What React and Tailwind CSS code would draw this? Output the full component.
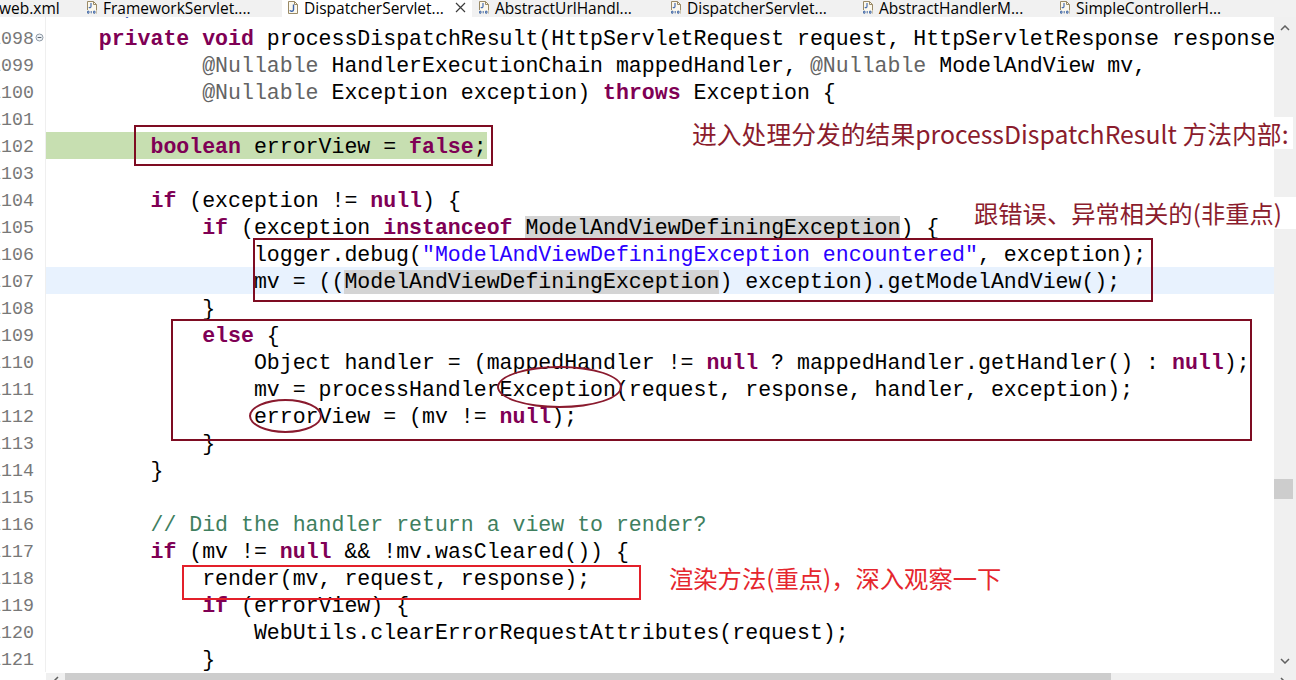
import React from 'react';

// ---------------------------------------------------------------------------
// Editor content: [text, kind] tokens per line
//   k = keyword, s = string, c = comment, a = annotation, m = occurrence mark
// ---------------------------------------------------------------------------
const LINES = [
  { n: 1097, t: [['     '], ['*/', 'j']] },
  { n: 1098, fold: true, t: [['    '], ['private', 'k'], [' '], ['void', 'k'], [' processDispatchResult(HttpServletRequest request, HttpServletResponse response,']] },
  { n: 1099, t: [['            '], ['@Nullable', 'a'], [' HandlerExecutionChain mappedHandler, '], ['@Nullable', 'a'], [' ModelAndView mv,']] },
  { n: 1100, t: [['            '], ['@Nullable', 'a'], [' Exception exception) '], ['throws', 'k'], [' Exception {']] },
  { n: 1101, t: [] },
  { n: 1102, green: true, t: [['        '], ['boolean', 'k'], [' errorView = '], ['false', 'k'], [';']] },
  { n: 1103, t: [] },
  { n: 1104, t: [['        '], ['if', 'k'], [' (exception != '], ['null', 'k'], [') {']] },
  { n: 1105, t: [['            '], ['if', 'k'], [' (exception '], ['instanceof', 'k'], [' '], ['ModelAndViewDefiningException', 'm'], [') {']] },
  { n: 1106, t: [['                logger.debug('], ['"ModelAndViewDefiningException encountered"', 's'], [', exception);']] },
  { n: 1107, current: true, t: [['                mv = (('], ['ModelAndViewDefiningException', 'm'], [') exception).getModelAndView();']] },
  { n: 1108, t: [['            }']] },
  { n: 1109, t: [['            '], ['else', 'k'], [' {']] },
  { n: 1110, t: [['                Object handler = (mappedHandler != '], ['null', 'k'], [' ? mappedHandler.getHandler() : '], ['null', 'k'], [');']] },
  { n: 1111, t: [['                mv = processHandlerException(request, response, handler, exception);']] },
  { n: 1112, t: [['                errorView = (mv != '], ['null', 'k'], [');']] },
  { n: 1113, t: [['            }']] },
  { n: 1114, t: [['        }']] },
  { n: 1115, t: [] },
  { n: 1116, t: [['        '], ['// Did the handler return a view to render?', 'c']] },
  { n: 1117, t: [['        '], ['if', 'k'], [' (mv != '], ['null', 'k'], [' && !mv.wasCleared()) {']] },
  { n: 1118, t: [['            render(mv, request, response);']] },
  { n: 1119, t: [['            '], ['if', 'k'], [' (errorView) {']] },
  { n: 1120, t: [['                WebUtils.clearErrorRequestAttributes(request);']] },
  { n: 1121, t: [['            }']] },
];

const TOKEN_CLASS = {
  k: 'text-[#7f0055] font-bold',
  s: 'text-[#2a00ff]',
  c: 'text-[#3f7f5f]',
  a: 'text-[#646464]',
  m: 'bg-[#d4d4d4]',
  j: 'text-[#3f5fbf]',
};

// ---------------------------------------------------------------------------
// Tabs
// ---------------------------------------------------------------------------
const TABS = [
  { label: 'web.xml', cls: 'w-[85px] -ml-[1px]', icon: null },
  { label: 'FrameworkServlet....', cls: 'w-[198px] pl-0', icon: 'class' },
  { label: 'DispatcherServlet...', cls: 'w-[190px] pl-[3px] bg-white', icon: 'java', active: true },
  { label: 'AbstractUrlHandl...', cls: 'w-[192px] pl-[4px]', icon: 'class' },
  { label: 'DispatcherServlet...', cls: 'w-[196px] pl-[4px]', icon: 'class' },
  { label: 'AbstractHandlerM...', cls: 'w-[197px] pl-0', icon: 'class' },
  { label: 'SimpleControllerH...', cls: 'w-[200px] pl-0', icon: 'class' },
];

function ClassIcon() {
  return (
    <svg width="15" height="15" viewBox="0 0 15 15" className="shrink-0 mr-[4px]">
      <path d="M3.5 1.5h6l3 3v9h-9z" fill="#fbf8ee" stroke="#9a8a66" />
      <path d="M9.5 1.5v3h3" fill="none" stroke="#9a8a66" />
      <path d="M7 3v3.5c0 1.2-1.3 1.5-2.2 0.8" fill="none" stroke="#4a6fb0" strokeWidth="1.2" />
      <path d="M2.5 10h10v4h-10z" fill="#fbf8ee" />
      <path d="M3.6 11.2h1.4v2h-1.4zM7.2 11v2.4M9.6 11.2h1.4v2h-1.4z" fill="none" stroke="#2c58a0" strokeWidth="0.9" />
    </svg>
  );
}

function JavaIcon() {
  return (
    <svg width="15" height="15" viewBox="0 0 15 15" className="shrink-0 mr-[4px]">
      <path d="M3.5 1.5h6l3 3v9h-9z" fill="#fbf8ee" stroke="#9a8a66" />
      <path d="M9.5 1.5v3h3" fill="none" stroke="#9a8a66" />
      <path d="M8.5 4.5v5.2c0 1.8-2.8 2.2-3.6 0.6" fill="none" stroke="#3a62a8" strokeWidth="1.4" />
    </svg>
  );
}

function TabBar() {
  return (
    <div className="flex h-[17px] bg-[#f1f1f1] overflow-hidden font-['Open_Sans','Liberation_Sans',sans-serif] text-[15.5px] leading-[16px] text-black">
      {TABS.map((tab, i) => (
        <div key={i} className={`flex items-start shrink-0 h-full ${tab.cls}`}>
          {tab.icon === 'class' && <ClassIcon />}
          {tab.icon === 'java' && <JavaIcon />}
          <span className="whitespace-pre">{tab.label}</span>
          {tab.active && (
            <svg width="11" height="11" viewBox="0 0 11 11" className="ml-auto mr-[6px] mt-[2px]">
              <path d="M1 1l9 9M10 1l-9 9" stroke="#3c3c3c" strokeWidth="1.2" />
            </svg>
          )}
        </div>
      ))}
    </div>
  );
}

// ---------------------------------------------------------------------------
// Editor rows
// ---------------------------------------------------------------------------
function CodeRow({ line }) {
  const text = line.t.map(([s, kind], i) => (
    <span key={i} className={kind ? TOKEN_CLASS[kind] : ''}>{s}</span>
  ));

  return (
    <div className="flex h-[27px]">
      <div className="flex items-center w-[46px] shrink-0 border-r border-[#efefef]">
        <div className="flex justify-end w-[34px] h-[27px] overflow-hidden font-['Liberation_Mono',monospace] text-[18.3px] leading-[27px] text-[#787878]">
          <span className="relative top-[2px]">{line.n}</span>
        </div>
        {line.fold && (
          <svg width="9" height="9" viewBox="0 0 9 9" className="ml-[1px]">
            <circle cx="4.5" cy="4.5" r="3.5" fill="#eef2f6" stroke="#8f9aa6" />
            <path d="M2.6 4.5h3.8" stroke="#5b6570" />
          </svg>
        )}
      </div>
      <div
        className={`flex-1 pl-[1px] whitespace-pre font-['Liberation_Mono',monospace] text-[21.55px] leading-[27px] text-black ${
          line.current ? 'bg-[#e8f2fe]' : ''
        }`}
      >
        {line.green ? (
          <span className="inline-block h-[27px] bg-[#c7dfb1] -ml-[1px] pl-[1px]">
            <span className="relative top-[2px]">{text}</span>
          </span>
        ) : (
          <span className="relative top-[2px]">{text}</span>
        )}
      </div>
    </div>
  );
}

// ---------------------------------------------------------------------------
// Scrollbars
// ---------------------------------------------------------------------------
function VScroll() {
  return (
    <div className="flex flex-col w-[22px] shrink-0 bg-[#f0f0f0]">
      <div className="h-[20px] flex justify-center pt-[8px]">
        <svg width="10" height="6" viewBox="0 0 10 6">
          <path d="M1 5l4-4 4 4" fill="none" stroke="#606060" strokeWidth="1.5" />
        </svg>
      </div>
      <div className="flex-1">
        <div className="mt-[442px] h-[20px] w-[19px] bg-[#cdcdcd]" />
      </div>
      <div className="h-[20px] flex justify-center pt-[5px]">
        <svg width="10" height="6" viewBox="0 0 10 6">
          <path d="M1 1l4 4 4-4" fill="none" stroke="#606060" strokeWidth="1.5" />
        </svg>
      </div>
    </div>
  );
}

function HScroll() {
  return (
    <div className="flex h-[7px] overflow-hidden">
      <div className="w-[46px] shrink-0 bg-white" />
      <div className="flex flex-1 bg-[#f0f0f0]">
        <div className="w-[19px] shrink-0 flex justify-center pt-[3px]">
          <svg width="6" height="10" viewBox="0 0 6 10">
            <path d="M5 1l-4 4 4 4" fill="none" stroke="#606060" strokeWidth="1.5" />
          </svg>
        </div>
        <div className="w-[1046px] shrink-0 bg-[#cdcdcd]" />
        <div className="flex-1 flex justify-end pr-[10px] pt-[4px]">
          <svg width="6" height="10" viewBox="0 0 6 10">
            <path d="M1 1l4 4-4 4" fill="none" stroke="#606060" strokeWidth="1.5" />
          </svg>
        </div>
      </div>
    </div>
  );
}

// ---------------------------------------------------------------------------
// Page
// ---------------------------------------------------------------------------
export default function App() {
  return (
    <div className="relative w-[1296px] h-[680px] overflow-hidden bg-white">
      <TabBar />
      <div className="flex h-[656px]">
        <div className="relative flex-1 overflow-hidden">
          <div className="-mt-[20px]">
            {LINES.map((line) => (
              <CodeRow key={line.n} line={line} />
            ))}
          </div>
        </div>
        <VScroll />
      </div>
      <HScroll />

      {/* Screenshot annotations drawn over the editor */}
      <div className="absolute left-[134px] top-[125px] w-[359px] h-[41px] border-2 border-[#7e0c22]" />
      <div className="absolute left-[253px] top-[238px] w-[900px] h-[64px] border-2 border-[#7e0c22]" />
      <div className="absolute left-[171px] top-[319px] w-[1081px] h-[122px] border-2 border-[#7e0c22]" />
      <div className="absolute left-[497px] top-[366px] w-[125px] h-[42px] rounded-[50%] border-2 border-[#8a1a2e]" />
      <div className="absolute left-[249px] top-[399px] w-[73px] h-[34px] rounded-[50%] border-2 border-[#8a1a2e]" />
      <div className="absolute left-[182px] top-[565px] w-[459px] h-[35px] border-2 border-[#e3202a]" />

      <div className="absolute left-[692px] top-[117px] bg-white pr-[4px] whitespace-pre font-['Microsoft_YaHei','Noto_Sans_CJK_SC',sans-serif] text-[24.8px] leading-[32px] text-[#8b1c2d]">
        进入处理分发的结果processDispatchResult 方法内部:
      </div>
      <div className="absolute left-[968px] top-[197px] w-[328px] pl-[6px] bg-white whitespace-pre font-['Microsoft_YaHei','Noto_Sans_CJK_SC',sans-serif] text-[24.3px] leading-[32px] text-[#8b1c2d]">
        跟错误、异常相关的(非重点)
      </div>
      <div className="absolute left-[669px] top-[562px] whitespace-pre font-['Microsoft_YaHei','Noto_Sans_CJK_SC',sans-serif] text-[24.3px] leading-[32px] text-[#e5262e]">
        渲染方法(重点)，深入观察一下
      </div>
    </div>
  );
}
